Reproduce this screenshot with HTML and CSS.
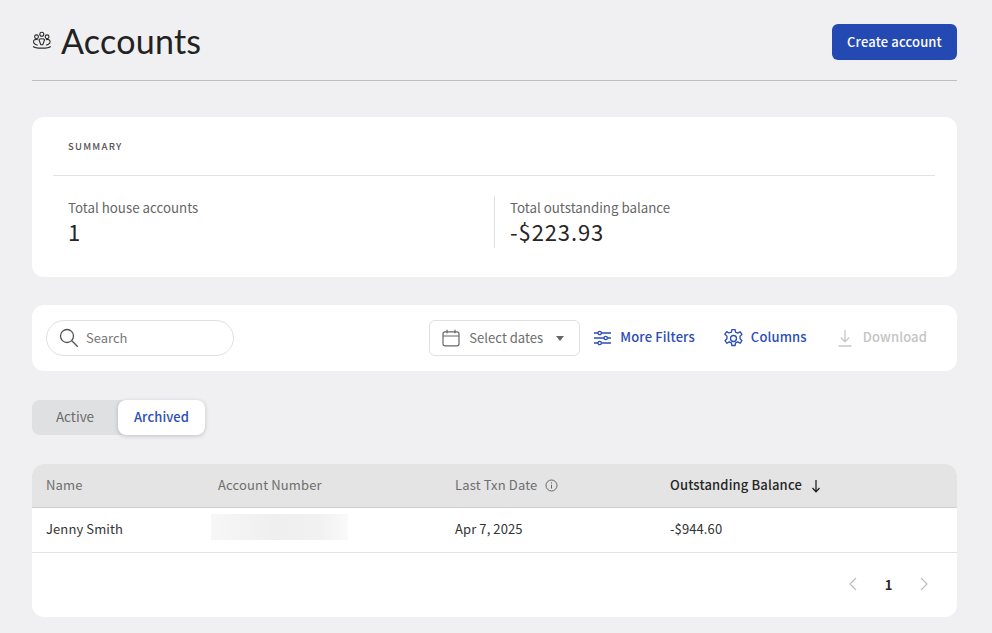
FILE: index.html
```html
<!DOCTYPE html>
<html lang="en">
<head>
<meta charset="utf-8">
<title>Accounts</title>
<link rel="stylesheet" href="styles.css">
</head>
<body>
<main class="page">
  <header class="page-header">
    <div class="title-wrap">
      <svg class="title-icon" width="20" height="20" viewBox="0 0 20 20" fill="none" stroke="#2a2a2a" stroke-width="1.1">
        <circle cx="9.800" cy="3.300" r="2"/><circle cx="4.500" cy="5.800" r="1.900"/><circle cx="15.100" cy="5.800" r="1.900"/>
        <path d="M8.800 13.800 7 8.800c.6-1.500 5-1.500 5.600 0l-1.800 5z"/>
        <path d="M5.600 8.600C3.200 8 1.500 9 1.500 10.800c0 1.200.8 2 1.700 2.500l2.400 1M14 8.600c2.400-.6 4.100.4 4.100 2.200 0 1.200-.8 2-1.700 2.500l-2.400 1"/>
        <path d="M1.200 15.400c2 2.400 15.400 2.400 17.400 0" stroke-width="1.300"/>
      </svg>
      <h1 class="title">Accounts</h1>
    </div>
    <button class="primary-btn">Create account</button>
  </header>

  <section class="card summary">
    <div class="summary-head">SUMMARY</div>
    <div class="summary-body">
      <div class="stat stat-first">
        <div class="stat-label">Total house accounts</div>
        <div class="stat-value">1</div>
      </div>
      <div class="stat stat-second">
        <div class="stat-label">Total outstanding balance</div>
        <div class="stat-value">-$223.93</div>
      </div>
    </div>
  </section>

  <section class="card toolbar">
    <div class="search">
      <svg width="20" height="20" viewBox="0 0 20 20" fill="none" stroke="#555" stroke-width="1.300"><circle cx="8" cy="8" r="6.500"/><path d="m12.800 12.800 6 6"/></svg>
      <span>Search</span>
    </div>
    <div class="tools">
      <div class="date-select">
        <svg width="18" height="18" viewBox="0 0 18 18" fill="none" stroke="#666" stroke-width="1.200"><rect x="1" y="2.800" width="16" height="14" rx="2"/><path d="M1 7h16M5 .8v3.500M13 .8v3.500"/></svg>
        <span>Select dates</span>
        <i class="caret"></i>
      </div>
      <button class="link-btn btn-filters">
        <svg width="17" height="16" viewBox="0 0 17 16" fill="none" stroke="#2b4db5" stroke-width="1.300"><path d="M0 3h4M7.500 3H17M0 8h10M13.500 8H17M0 13h4M7.500 13H17"/><circle cx="5.700" cy="3" r="1.700"/><circle cx="11.700" cy="8" r="1.700"/><circle cx="5.700" cy="13" r="1.700"/></svg>
        More Filters
      </button>
      <button class="link-btn btn-columns">
        <svg width="21" height="21" viewBox="0 0 24 24" fill="none" stroke="#2b4db5" stroke-width="1.500" stroke-linejoin="round"><circle cx="12" cy="12" r="3.400"/><path d="M10.200 1.800h3.600l.6 3 2.500 1.100 2.600-1.600 2.200 3-2.200 2.200v2.800l2.200 2.200-2.200 3-2.600-1.600-2.500 1.100-.6 3h-3.600l-.6-3-2.500-1.100-2.600 1.600-2.200-3 2.200-2.200V9.300L2.100 7.100l2.200-3 2.600 1.600 2.700-1.100z"/></svg>
        Columns
      </button>
      <button class="link-btn btn-download">
        <svg width="14" height="18" viewBox="0 0 14 18" fill="none" stroke="#c8c8c8" stroke-width="1.300"><path d="M7 1v11.500M2.800 8.500 7 12.800l4.200-4.300M.5 17h13"/></svg>
        Download
      </button>
    </div>
  </section>

  <div class="tabs">
    <div class="tab">Active</div>
    <div class="tab tab-active">Archived</div>
  </div>

  <section class="table-card">
    <div class="row row-head">
      <div>Name</div>
      <div>Account Number</div>
      <div class="th-info">Last Txn Date
        <svg width="13" height="13" viewBox="0 0 13 13" fill="none" stroke="#666" stroke-width="1"><circle cx="6.500" cy="6.500" r="5.500"/><path d="M6.500 5.800v3.700M6.500 3.300v1.200"/></svg>
      </div>
      <div class="th-sorted">Outstanding Balance
        <svg width="10" height="14" viewBox="0 0 10 14" fill="none" stroke="#222" stroke-width="1.300"><path d="M5 1v11.500M1.500 9 5 12.700 8.500 9"/></svg>
      </div>
    </div>
    <div class="row row-body">
      <div>Jenny Smith</div>
      <div class="redact-cell"><div class="redacted"></div></div>
      <div>Apr 7, 2025</div>
      <div>-$944.60</div>
    </div>
    <div class="pager">
      <svg width="10" height="14" viewBox="0 0 10 14" fill="none" stroke="#bdbdbd" stroke-width="1.200"><path d="M8 1 2 7l6 6"/></svg>
      <span class="page-num">1</span>
      <svg width="10" height="14" viewBox="0 0 10 14" fill="none" stroke="#bdbdbd" stroke-width="1.200"><path d="m2 1 6 6-6 6"/></svg>
    </div>
  </section>
</main>
</body>
</html>
```
FILE: styles.css
```css
* { box-sizing: border-box; }
html, body { margin: 0; height: 100%; }
body {
  background: #f0f0f2;
  font-family: "Noto Sans CJK JP", "Noto Sans", "Liberation Sans", sans-serif;
  color: #262626;
  overflow: hidden;
}
.page { width: 925px; margin-left: 32px; }
.page-header {
  height: 81px;
  padding-top: 24px;
  border-bottom: 1px solid #bfbfbf;
  display: flex;
  justify-content: space-between;
  align-items: flex-start;
  margin-bottom: 36px;
}
.title-wrap { display: flex; align-items: center; height: 34px; }
.title-icon { margin-right: 9px; }
.title {
  margin: 0;
  font-family: Lato, sans-serif;
  font-weight: 400;
  font-size: 34px;
  line-height: 34px;
  letter-spacing: .25px;
  color: #222;
}
.primary-btn {
  width: 125px;
  height: 36px;
  border: 0;
  border-radius: 6px;
  background: #2549b3;
  color: #fff;
  font: 500 13px/34px "Noto Sans CJK JP", sans-serif;
  letter-spacing: .15px;
  padding: 0;
}
.card { background: #fff; border-radius: 12px; }
.summary { height: 160px; padding: 0 22px 0 21px; margin-bottom: 28px; }
.summary-head {
  height: 59px;
  padding: 22px 0 0 15px;
  border-bottom: 1px solid #e2e2e2;
  font-size: 9.500px;
  line-height: 14px;
  font-weight: 500;
  letter-spacing: 1.250px;
  color: #555;
}
.summary-body { display: flex; padding-top: 20px; }
.stat { height: 52px; }
.stat-first { width: 442px; padding-left: 15px; border-right: 1px solid #e2e2e2; }
.stat-second { padding-left: 15px; }
.stat-label { font-size: 13.300px; line-height: 24px; color: #666; }
.stat-value { font-size: 22px; line-height: 27px; color: #262626; letter-spacing: .9px; margin-top: -2px; }
.toolbar {
  height: 66px;
  padding: 0 30px 0 14px;
  display: flex;
  justify-content: space-between;
  align-items: center;
  margin-bottom: 29px;
}
.search {
  width: 188px;
  height: 36px;
  border: 1px solid #e0e0e0;
  border-radius: 18px;
  display: flex;
  align-items: center;
  gap: 7px;
  padding: 0 0 2px 12px;
  font-size: 13px;
  color: #777;
}
.search svg { margin-top: 2px; }
.tools { display: flex; align-items: center; }
.date-select {
  width: 151px;
  height: 36px;
  border: 1px solid #e0e0e0;
  border-radius: 6px;
  display: flex;
  align-items: center;
  padding-left: 12px;
  font-size: 13.100px;
  color: #6e6e6e;
}
.date-select span { margin: 0 0 2px 9px; }
.caret {
  margin-left: 13px;
  border: 4.500px solid transparent;
  border-top: 5px solid #666;
  border-bottom: 0;
}
.link-btn {
  border: 0;
  background: none;
  padding: 0 0 2px;
  display: flex;
  align-items: center;
  font: 500 13px/18px "Noto Sans CJK JP", sans-serif;
  letter-spacing: .13px;
  color: #2b4db5;
}
.link-btn svg { margin-top: 2px; }
.btn-filters { margin-left: 14px; gap: 9px; }
.btn-columns { margin-left: 28px; gap: 7px; }
.btn-download { margin-left: 31px; gap: 11px; color: #c4c4c4; }
.tabs {
  width: 173px;
  height: 35px;
  background: #dfe0e2;
  border-radius: 8px;
  display: flex;
  margin-bottom: 29px;
}
.tab {
  width: 86px;
  text-align: center;
  font-size: 13.500px;
  line-height: 33px;
  color: #6b6b6b;
}
.tab-active {
  width: 87px;
  height: 35px;
  background: #fff;
  border-radius: 8px;
  color: #2b4db5;
  font-weight: 500;
  font-size: 13px;
  letter-spacing: .1px;
  box-shadow: 0 1px 4px rgba(0,0,0,.2);
}
.table-card { background: #fff; border-radius: 12px; overflow: hidden; height: 153px; }
.row {
  display: grid;
  grid-template-columns: 172px 237px 215px 1fr;
  padding-left: 14px;
  align-items: center;
}
.row-head {
  height: 44px;
  padding-bottom: 2px;
  background: #e4e4e4;
  border-bottom: 1px solid #cfcfcf;
  font-size: 13px;
  letter-spacing: .15px;
  color: #6e6e6e;
}
.th-info { display: flex; align-items: center; gap: 8px; }
.th-info svg, .th-sorted svg { margin-top: 2px; }
.th-sorted { display: flex; align-items: center; gap: 9px; font-weight: 500; color: #262626; }
.row-body {
  height: 45px;
  padding-bottom: 3px;
  border-bottom: 1px solid #e4e4e4;
  font-size: 13px;
  letter-spacing: .1px;
  color: #333;
}
.redact-cell { position: relative; height: 100%; }
.redacted {
  position: absolute;
  left: -7px;
  top: 6px;
  width: 137px;
  height: 26px;
  background: linear-gradient(90deg, #f7f7f7, #efefef 45%, #f1f1f1 80%, #fafafa);
}
.pager {
  display: flex;
  justify-content: flex-end;
  align-items: center;
  height: 62px;
  padding-right: 28px;
  gap: 26.500px;
}
.page-num { font-size: 13px; font-weight: 700; color: #262626; }
```
